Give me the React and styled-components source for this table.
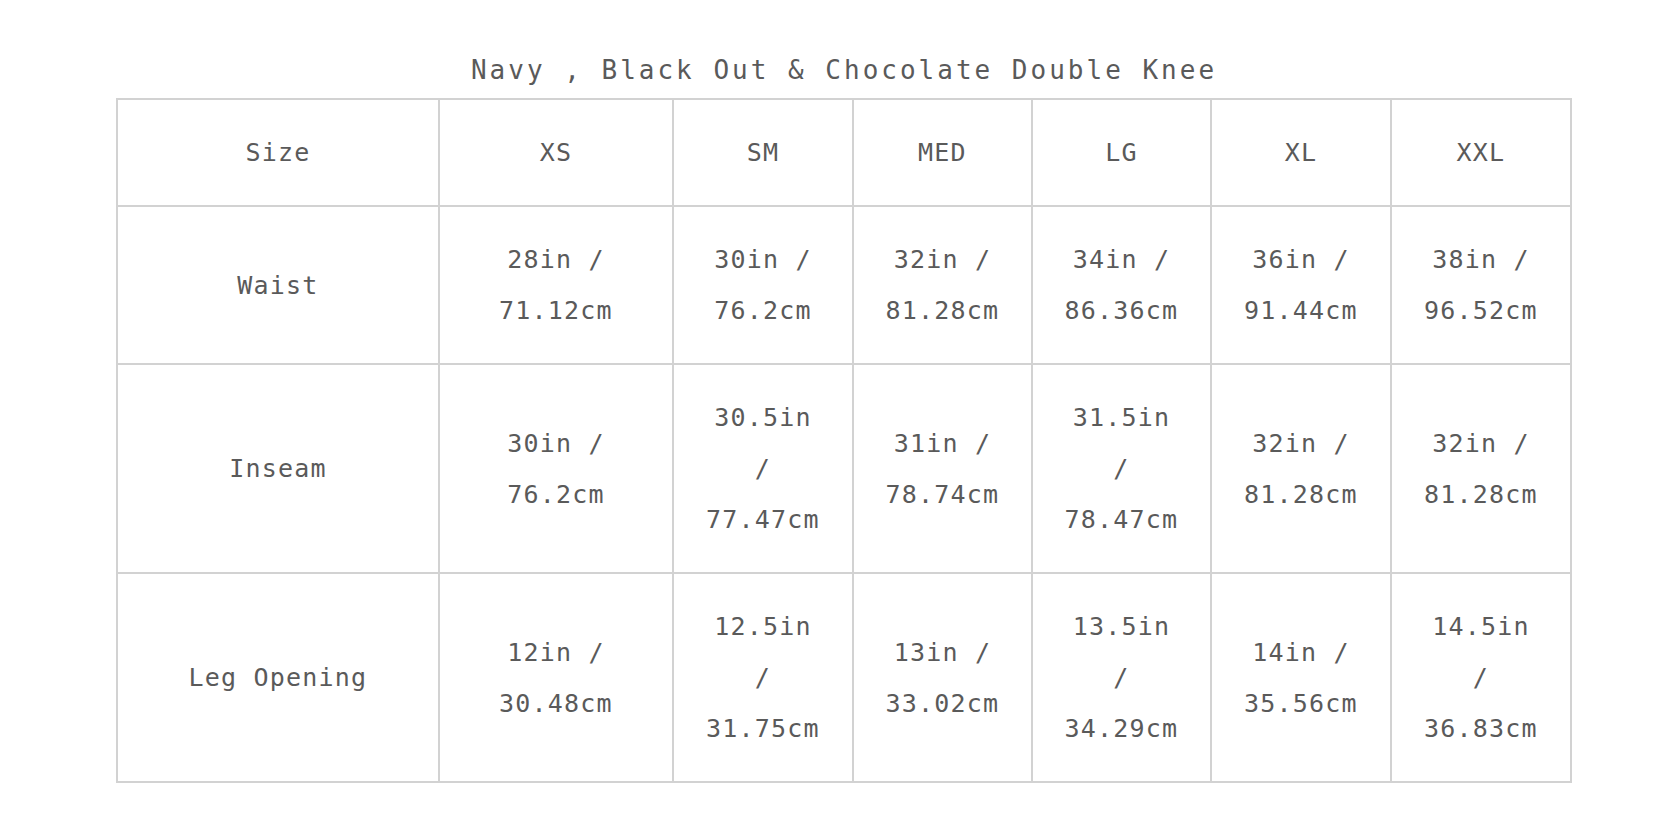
import styled, { createGlobalStyle } from "styled-components";

const sizes = ["XS", "SM", "MED", "LG", "XL", "XXL"];

const rows = [
  {
    label: "Waist",
    values: [
      "28in / 71.12cm",
      "30in / 76.2cm",
      "32in / 81.28cm",
      "34in / 86.36cm",
      "36in / 91.44cm",
      "38in / 96.52cm",
    ],
  },
  {
    label: "Inseam",
    values: [
      "30in / 76.2cm",
      "30.5in / 77.47cm",
      "31in / 78.74cm",
      "31.5in / 78.47cm",
      "32in / 81.28cm",
      "32in / 81.28cm",
    ],
  },
  {
    label: "Leg Opening",
    values: [
      "12in / 30.48cm",
      "12.5in / 31.75cm",
      "13in / 33.02cm",
      "13.5in / 34.29cm",
      "14in / 35.56cm",
      "14.5in / 36.83cm",
    ],
  },
];

const colWidths = [322, 234, 180, 179, 179, 180, 180];

function App() {
  return (
    <>
      <GlobalStyle />
      <Page>
        <Title>Navy , Black Out &amp; Chocolate Double Knee</Title>
        <SizeTable>
          <colgroup>
            {colWidths.map((w, i) => (
              <col key={i} width={w} />
            ))}
          </colgroup>
          <tbody>
            <tr>
              <Cell>Size</Cell>
              {sizes.map((s) => (
                <Cell key={s}>{s}</Cell>
              ))}
            </tr>
            {rows.map((row) => (
              <tr key={row.label}>
                <Cell>{row.label}</Cell>
                {row.values.map((v, i) => (
                  <Cell key={i}>{v}</Cell>
                ))}
              </tr>
            ))}
          </tbody>
        </SizeTable>
      </Page>
    </>
  );
}

const GlobalStyle = createGlobalStyle`
  body {
    margin: 0;
    background: #fff;
  }
`;

const Page = styled.div`
  width: 1456px;
  margin-left: 116px;
  padding-top: 55px;
  font-family: "DejaVu Sans Mono", "Liberation Mono", monospace;
  color: #5a5a5a;
`;

const Title = styled.h2`
  margin: 0 0 13px;
  text-align: center;
  font-size: 26px;
  line-height: 30px;
  font-weight: normal;
  letter-spacing: 3px;
  color: #5a5a5a;
`;

const SizeTable = styled.table`
  width: 1456px;
  table-layout: fixed;
  border-collapse: separate;
  border-spacing: 0;
  border: 1px solid #d2d2d2;
`;

const Cell = styled.td`
  border: 1px solid #d2d2d2;
  padding: 27px 28px;
  text-align: center;
  vertical-align: middle;
  font-size: 25px;
  line-height: 51px;
  letter-spacing: 1.2px;
  color: #5a5a5a;
`;

export default App;
